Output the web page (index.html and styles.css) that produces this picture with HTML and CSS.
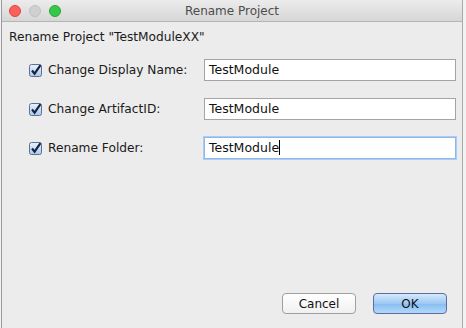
FILE: index.html
```html
<!DOCTYPE html>
<html lang="en">
<head>
    <meta charset="UTF-8">
    <title>Rename Project</title>
    <link rel="stylesheet" href="styles.css">
</head>
<body>
<div class="window">
    <div class="titlebar">
        <div class="lights">
            <span class="light red"></span>
            <span class="light gray"></span>
            <span class="light green"></span>
        </div>
        <div class="title">Rename Project</div>
        <div></div>
    </div>

    <div class="content">
        <div class="heading">Rename Project "TestModuleXX"</div>

        <div class="row">
            <label class="check">
                <svg class="box" width="13" height="13" viewBox="0 0 13 13">
                    <defs>
                        <linearGradient id="g1" x1="0" y1="0" x2="0" y2="1">
                            <stop offset="0" stop-color="#e9f2fc"/>
                            <stop offset="1" stop-color="#a9c9ee"/>
                        </linearGradient>
                    </defs>
                    <rect x="0.5" y="0.5" width="12" height="12" rx="2" fill="url(#g1)" stroke="#5d6f93"/>
                    <path d="M3 6.5 L5.6 9.6 L11.5 1.2" fill="none" stroke="#162440" stroke-width="2.2"/>
                </svg>
                <span>Change Display Name:</span>
            </label>
            <div class="field">TestModule</div>
        </div>

        <div class="row">
            <label class="check">
                <svg class="box" width="13" height="13" viewBox="0 0 13 13">
                    <rect x="0.5" y="0.5" width="12" height="12" rx="2" fill="url(#g1)" stroke="#5d6f93"/>
                    <path d="M3 6.5 L5.6 9.6 L11.5 1.2" fill="none" stroke="#162440" stroke-width="2.2"/>
                </svg>
                <span>Change ArtifactID:</span>
            </label>
            <div class="field">TestModule</div>
        </div>

        <div class="row">
            <label class="check">
                <svg class="box" width="13" height="13" viewBox="0 0 13 13">
                    <rect x="0.5" y="0.5" width="12" height="12" rx="2" fill="url(#g1)" stroke="#5d6f93"/>
                    <path d="M3 6.5 L5.6 9.6 L11.5 1.2" fill="none" stroke="#162440" stroke-width="2.2"/>
                </svg>
                <span>Rename Folder:</span>
            </label>
            <div class="field focus">TestModule<span class="caret"></span></div>
        </div>

        <div class="buttons">
            <button class="btn">Cancel</button>
            <button class="btn ok">OK</button>
        </div>
    </div>
</div>
</body>
</html>
```

FILE: styles.css
```css
*{
    margin: 0;
    padding: 0;
    box-sizing: border-box;
}

body{
    width: 466px;
    height: 328px;
    overflow: hidden;
    background-color: #f2f2f2;
    font-family: "DejaVu Sans", "Liberation Sans", sans-serif;
    font-size: 12.2px;
    color: #1a1a1a;
}

.window{
    width: 462px;
    height: 340px;
    margin-left: 1px;
    border-left: 1px solid #9a9a9a;
    border-right: 1px solid #a8a8a8;
    background-color: #ececec;
}

.titlebar{
    height: 22px;
    display: grid;
    grid-template-columns: 1fr auto 1fr;
    align-items: center;
    background: linear-gradient(#ececec, #d6d6d6);
    border-bottom: 1px solid #b4b4b4;
    border-radius: 4px 4px 0 0;
}

.lights{
    display: flex;
    gap: 8px;
    padding-left: 7px;
}

.light{
    width: 12px;
    height: 12px;
    border-radius: 50%;
}

.red{
    background-color: #fc605c;
    border: 1px solid #e0443e;
}

.gray{
    background-color: #d0d0d0;
    border: 1px solid #c0c0c0;
}

.green{
    background-color: #34c84a;
    border: 1px solid #24a832;
}

.title{
    color: #4d4d4d;
    font-size: 12px;
}

.content{
    padding: 8px 0 0 7px;
}

.heading{
    height: 22px;
}

.row{
    display: flex;
    align-items: center;
    height: 22px;
    margin-top: 7px;
    margin-bottom: 17px;
}

.row + .row{
    margin-top: 0;
}

.check{
    display: flex;
    align-items: center;
    gap: 6px;
    width: 195px;
    padding-left: 20px;
}

.field{
    width: 252px;
    height: 22px;
    background-color: #fff;
    border: 1px solid #a4a4a4;
    padding: 2px 0 0 4px;
    font-size: 12.5px;
    color: #111;
}

.field.focus{
    border: 1px solid #8fb7e8;
    box-shadow: 0 0 0 1px #a9cdf5;
}

.caret{
    display: inline-block;
    width: 1px;
    height: 15px;
    background-color: #000;
    vertical-align: -3px;
}

.buttons{
    display: flex;
    justify-content: flex-end;
    gap: 17px;
    padding-right: 15px;
    margin-top: 134px;
}

.btn{
    width: 74px;
    height: 21px;
    border: 1px solid #a0a0a0;
    border-radius: 4px;
    background: linear-gradient(#ffffff, #f0f0f0);
    font-family: "DejaVu Sans", "Liberation Sans", sans-serif;
    font-size: 12px;
    color: #111;
}

.btn.ok{
    border-color: #5a6fa0;
    background: linear-gradient(#d6e9fb, #9cc8f3 50%, #86bcf1 51%, #b3d9fa);
}
```
